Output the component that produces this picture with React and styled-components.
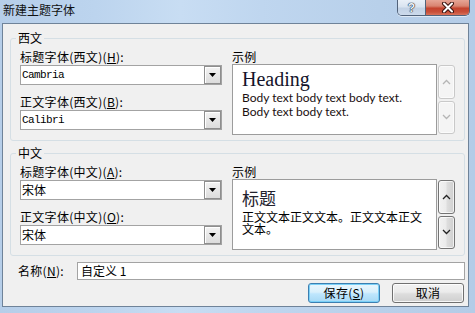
import React from 'react'
import styled, { createGlobalStyle } from 'styled-components'

const GlobalStyle = createGlobalStyle`
  html, body {
    margin: 0;
    padding: 0;
  }
  body {
    width: 475px;
    height: 313px;
    overflow: hidden;
    background: #b9d1ea;
    font-family: "Noto Sans CJK SC", "Liberation Sans", sans-serif;
    color: #000;
  }
`

const Window = styled.div`
  width: 475px;
  height: 313px;
  box-sizing: border-box;
  display: flex;
  flex-direction: column;
  padding: 0 6px 6px 2px;
  background: linear-gradient(90deg, #b6cee9 0%, #bcd4ee 20%, #c8ddf3 38%, #bfd6ef 55%, #b8d0ea 80%, #b4cce7 100%);
`

const TitleBar = styled.div`
  height: 23px;
  flex: none;
  display: flex;
  justify-content: space-between;
  align-items: flex-start;
`

const Title = styled.div`
  margin: 3px 0 0 1px;
  font-size: 12px;
  line-height: 14px;
  color: #111;
`

const CaptionButtons = styled.div`
  display: flex;
  height: 15px;
  margin-right: -1px;
  border: 1px solid #52637a;
  border-top: none;
  border-radius: 0 0 5px 5px;
  overflow: hidden;
  box-shadow: 0 1px 0 rgba(255, 255, 255, 0.55);
`

const CaptionButton = styled.div`
  width: ${(p) => p.$w}px;
  display: flex;
  align-items: center;
  justify-content: center;
  background: ${(p) =>
    p.$close
      ? 'linear-gradient(#e6a596 0%, #d98471 40%, #c4432e 55%, #c9503a 80%, #d8735c 100%)'
      : 'linear-gradient(#e9f0f8 0%, #d9e4f0 45%, #c2d2e5 55%, #ccdaeb 100%)'};
  & + & {
    border-left: 1px solid #52637a;
  }
`

const HelpGlyph = styled.span`
  font-family: "Liberation Sans", sans-serif;
  font-weight: bold;
  font-size: 12px;
  line-height: 12px;
  color: #eef3f9;
  text-shadow: 0 0 1px #1d2a3a, 0 0 1px #1d2a3a, 0 0 1px #1d2a3a;
`

const Client = styled.div`
  flex: 1;
  display: flex;
  flex-direction: column;
  border: 1px solid #6f8399;
  background: #f0f0f0;
  padding: 7px 3px 0 7px;
`

const Group = styled.fieldset`
  margin: ${(p) => p.$top || 0}px 0 0 0;
  padding: 5px 9px 5px 9px;
  border: 1px solid #d5dfe5;
  border-radius: 3px;
  min-width: 0;
  display: flex;
  gap: 10px;
`

const Legend = styled.legend`
  padding: 0 2px;
  margin-left: -4px;
  font-size: 12px;
  line-height: 14px;
`

const LeftCol = styled.div`
  width: 202px;
  display: flex;
  flex-direction: column;
`

const Field = styled.div`
  display: flex;
  flex-direction: column;
  margin-top: ${(p) => p.$top || 0}px;
`

const Label = styled.div`
  font-size: 12px;
  line-height: 14px;
  letter-spacing: 0.3px;
  margin-bottom: ${(p) => p.$mb ?? 1}px;
  white-space: nowrap;
`

const Combo = styled.div`
  height: 20px;
  box-sizing: border-box;
  border: 1px solid #a3a3a3;
  background: #fff;
  display: flex;
  align-items: stretch;
`

const ComboText = styled.div`
  flex: 1;
  padding-left: 1px;
  display: flex;
  align-items: center;
  font-family: ${(p) => (p.$mono ? '"Liberation Mono", monospace' : '"Noto Sans CJK SC", sans-serif')};
  font-size: ${(p) => (p.$mono ? '11px' : '12px')};
  letter-spacing: ${(p) => (p.$mono ? '-0.6px' : '0')};
  line-height: 14px;
`

const ArrowButton = styled.div`
  width: 17px;
  box-sizing: border-box;
  border: 1px solid #8e8e8e;
  box-shadow: inset 1px 1px 0 #fff;
  background: linear-gradient(#f3f3f3, #dcdcdc);
  display: flex;
  align-items: center;
  justify-content: center;
`

const RightCol = styled.div`
  flex: 1;
  display: flex;
  flex-direction: column;
`

const PreviewRow = styled.div`
  display: flex;
  height: 71px;
`

const Preview = styled.div`
  width: 205px;
  box-sizing: border-box;
  border: 1px solid #9c9c9c;
  background: #fff;
  padding: ${(p) => p.$pt}px ${(p) => p.$pr}px 0 9px;
  overflow: hidden;
`

const LatinHeading = styled.div`
  font-family: "Liberation Serif", serif;
  font-size: 20px;
  line-height: 23px;
  color: #14142a;
`

const LatinBody = styled.div`
  font-family: Lato, "Liberation Sans", sans-serif;
  font-size: 12px;
  line-height: 14px;
  color: #1a1010;
`

const CjkHeading = styled.div`
  font-size: 17px;
  line-height: 26px;
  color: #22222e;
`

const CjkBody = styled.div`
  font-size: 12px;
  line-height: 12px;
  color: #000;
`

const ScrollCol = styled.div`
  width: 17px;
  margin-left: 1px;
  padding: 1px 0;
  display: flex;
  flex-direction: column;
  gap: 2px;
`

const ScrollButton = styled.div`
  flex: 1;
  border-radius: 3px;
  display: flex;
  align-items: center;
  justify-content: center;
  border: 1px solid ${(p) => (p.$disabled ? '#c9c9c9' : '#747474')};
  background: ${(p) =>
    p.$disabled
      ? '#f4f4f4'
      : 'linear-gradient(90deg, #f2f2f2 0%, #ebebeb 45%, #dddddd 55%, #cfcfcf 100%)'};
  box-shadow: inset 0 0 0 1px ${(p) => (p.$disabled ? '#fbfbfb' : 'rgba(255,255,255,0.7)')};
`

const NameRow = styled.div`
  display: flex;
  align-items: center;
  margin-top: 6px;
  padding-left: 8px;
  height: 18px;
`

const NameLabel = styled.div`
  width: 59px;
  font-size: 12px;
  line-height: 14px;
  letter-spacing: 0.3px;
`

const TextInput = styled.div`
  flex: 1;
  height: 18px;
  box-sizing: border-box;
  border: 1px solid #a3a3a3;
  background: #fff;
  padding-left: 3px;
  font-size: 12px;
  line-height: 16px;
`

const ButtonRow = styled.div`
  display: flex;
  justify-content: flex-end;
  gap: 12px;
  margin-top: 3px;
  padding-right: 1px;
`

const PushButton = styled.div`
  width: 72px;
  height: 20px;
  box-sizing: border-box;
  border-radius: 3px;
  display: flex;
  align-items: center;
  justify-content: center;
  font-size: 12px;
  line-height: 14px;
  letter-spacing: 0.3px;
  border: 1px solid ${(p) => (p.$default ? '#3c7fb1' : '#707070')};
  background: ${(p) =>
    p.$default
      ? 'linear-gradient(#eaf6fd 0%, #d9f0fc 45%, #bee6fd 55%, #a7d9f5 100%)'
      : 'linear-gradient(#f2f2f2 0%, #ebebeb 45%, #dddddd 55%, #cfcfcf 100%)'};
  box-shadow: inset 0 0 0 1px ${(p) => (p.$default ? '#7ad0f7' : 'rgba(255,255,255,0.8)')};
`

const DownTriangle = () => (
  <svg width="7" height="4" viewBox="0 0 7 4">
    <polygon points="0,0 7,0 3.5,4" fill="#000" />
  </svg>
)

const Chevron = ({ up, color }) => (
  <svg width="9" height="6" viewBox="0 0 9 6">
    <polyline
      points={up ? '1,5 4.5,1.5 8,5' : '1,1 4.5,4.5 8,1'}
      fill="none"
      stroke={color}
      strokeWidth="1.3"
    />
  </svg>
)

const CloseGlyph = () => (
  <svg width="14" height="11" viewBox="0 0 14 11">
    <path d="M3 1.5 L11 9.5 M11 1.5 L3 9.5" stroke="#3a1410" strokeWidth="4" strokeLinecap="round" />
    <path d="M3 1.5 L11 9.5 M11 1.5 L3 9.5" stroke="#fff" strokeWidth="2" strokeLinecap="round" />
  </svg>
)

const ComboBox = ({ value, mono }) => (
  <Combo>
    <ComboText $mono={mono}>{value}</ComboText>
    <ArrowButton>
      <DownTriangle />
    </ArrowButton>
  </Combo>
)

const Scroller = ({ disabled }) => {
  const c = disabled ? '#b5b5b5' : '#222'
  return (
    <ScrollCol>
      <ScrollButton $disabled={disabled}>
        <Chevron up color={c} />
      </ScrollButton>
      <ScrollButton $disabled={disabled}>
        <Chevron color={c} />
      </ScrollButton>
    </ScrollCol>
  )
}

export default function App() {
  return (
    <>
      <GlobalStyle />
      <Window>
        <TitleBar>
          <Title>新建主题字体</Title>
          <CaptionButtons>
            <CaptionButton $w={27}>
              <HelpGlyph>?</HelpGlyph>
            </CaptionButton>
            <CaptionButton $w={43} $close>
              <CloseGlyph />
            </CaptionButton>
          </CaptionButtons>
        </TitleBar>
        <Client>
          <Group>
            <Legend>西文</Legend>
            <LeftCol>
              <Field>
                <Label>
                  标题字体(西文)(<u>H</u>):
                </Label>
                <ComboBox value="Cambria" mono />
              </Field>
              <Field $top={10}>
                <Label>
                  正文字体(西文)(<u>B</u>):
                </Label>
                <ComboBox value="Calibri" mono />
              </Field>
            </LeftCol>
            <RightCol>
              <Label $mb={0}>示例</Label>
              <PreviewRow>
                <Preview $pt={3} $pr={22}>
                  <LatinHeading>Heading</LatinHeading>
                  <LatinBody>Body text body text body text. Body text body text.</LatinBody>
                </Preview>
                <Scroller disabled />
              </PreviewRow>
            </RightCol>
          </Group>
          <Group $top={5}>
            <Legend>中文</Legend>
            <LeftCol>
              <Field>
                <Label>
                  标题字体(中文)(<u>A</u>):
                </Label>
                <ComboBox value="宋体" />
              </Field>
              <Field $top={10}>
                <Label>
                  正文字体(中文)(<u>O</u>):
                </Label>
                <ComboBox value="宋体" />
              </Field>
            </LeftCol>
            <RightCol>
              <Label $mb={0}>示例</Label>
              <PreviewRow>
                <Preview $pt={5} $pr={10}>
                  <CjkHeading>标题</CjkHeading>
                  <CjkBody>正文文本正文文本。正文文本正文文本。</CjkBody>
                </Preview>
                <Scroller />
              </PreviewRow>
            </RightCol>
          </Group>
          <NameRow>
            <NameLabel>
              名称(<u>N</u>):
            </NameLabel>
            <TextInput>自定义 1</TextInput>
          </NameRow>
          <ButtonRow>
            <PushButton $default>
              保存(<u>S</u>)
            </PushButton>
            <PushButton>取消</PushButton>
          </ButtonRow>
        </Client>
      </Window>
    </>
  )
}
